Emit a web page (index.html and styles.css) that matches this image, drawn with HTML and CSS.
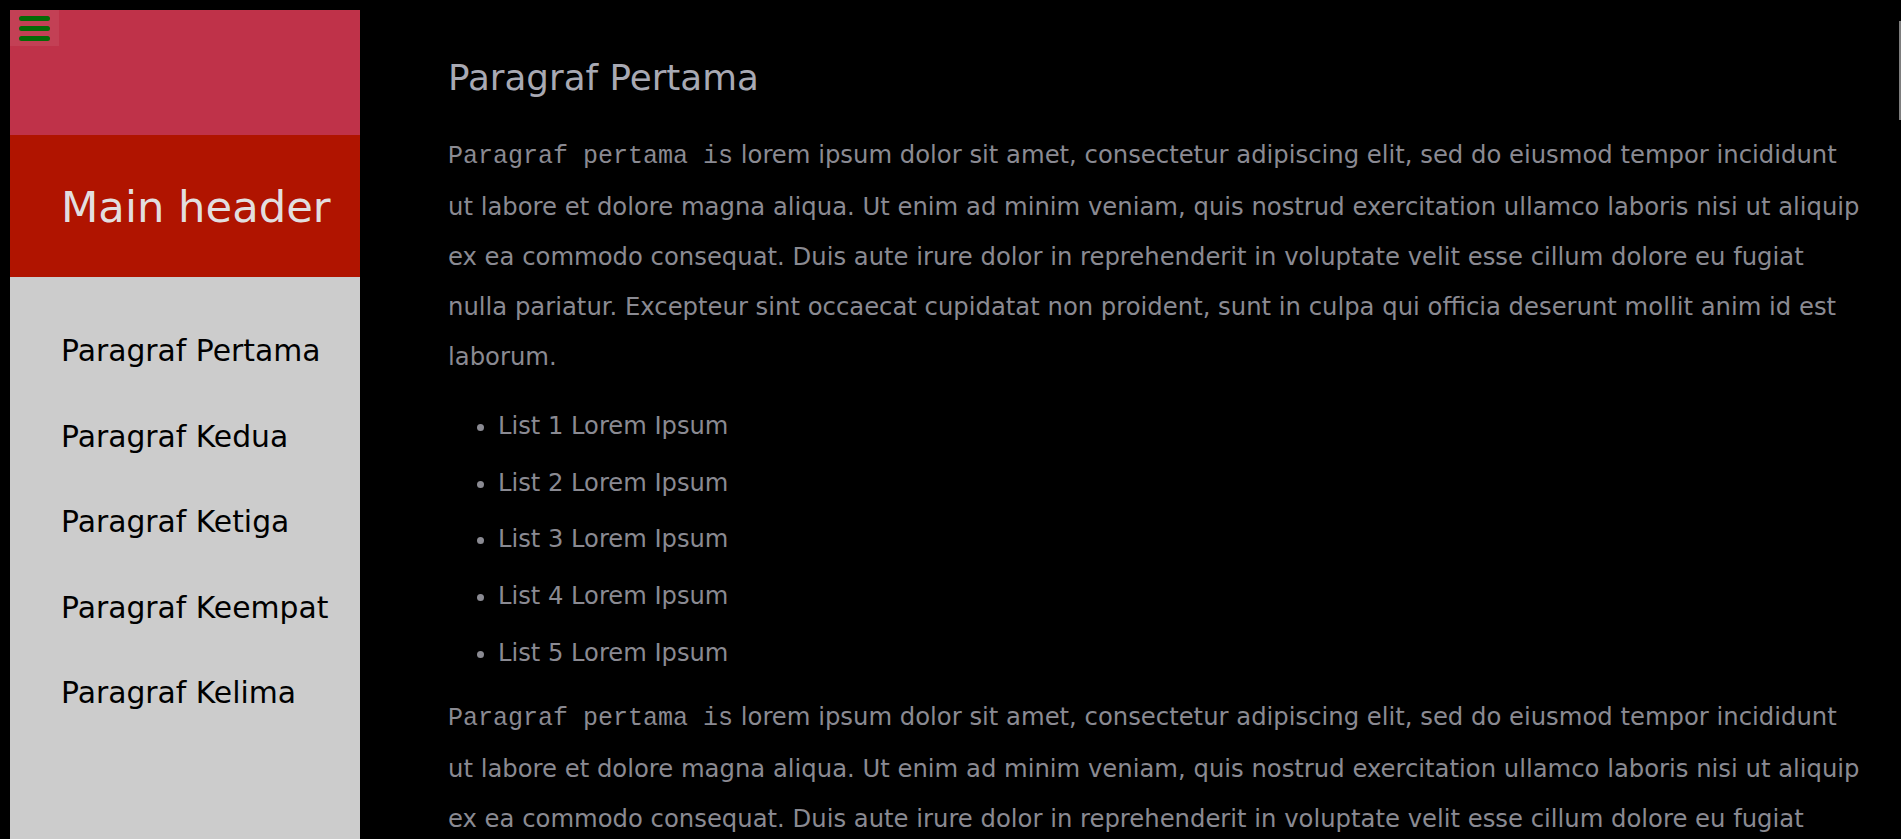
FILE: index.html
```html
<!DOCTYPE html>
<html lang="id">
<head>
<meta charset="utf-8">
<title>Paragraf</title>
<link rel="stylesheet" href="styles.css">
</head>
<body>
<aside class="sidebar">
  <button class="menu-btn" aria-label="Menu">
    <span class="bar"></span><span class="bar"></span><span class="bar"></span>
  </button>
  <div class="sidebar-top"></div>
  <header class="sidebar-header"><h1 class="main-title">Main header</h1></header>
  <nav class="nav">
    <a class="nav-item" href="#p1">Paragraf Pertama</a>
    <a class="nav-item" href="#p2">Paragraf Kedua</a>
    <a class="nav-item" href="#p3">Paragraf Ketiga</a>
    <a class="nav-item" href="#p4">Paragraf Keempat</a>
    <a class="nav-item" href="#p5">Paragraf Kelima</a>
  </nav>
</aside>
<main class="content">
  <section class="section" id="p1">
    <h2 class="section-title">Paragraf Pertama</h2>
    <p class="text"><code class="code">Paragraf pertama is</code> lorem ipsum dolor sit amet, consectetur adipiscing elit, sed do eiusmod tempor incididunt ut labore et dolore magna aliqua. Ut enim ad minim veniam, quis nostrud exercitation ullamco laboris nisi ut aliquip ex ea commodo consequat. Duis aute irure dolor in reprehenderit in voluptate velit esse cillum dolore eu fugiat nulla pariatur. Excepteur sint occaecat cupidatat non proident, sunt in culpa qui officia deserunt mollit anim id est laborum.</p>
    <ul class="list">
      <li>List 1 Lorem Ipsum</li>
      <li>List 2 Lorem Ipsum</li>
      <li>List 3 Lorem Ipsum</li>
      <li>List 4 Lorem Ipsum</li>
      <li>List 5 Lorem Ipsum</li>
    </ul>
    <p class="text"><code class="code">Paragraf pertama is</code> lorem ipsum dolor sit amet, consectetur adipiscing elit, sed do eiusmod tempor incididunt ut labore et dolore magna aliqua. Ut enim ad minim veniam, quis nostrud exercitation ullamco laboris nisi ut aliquip ex ea commodo consequat. Duis aute irure dolor in reprehenderit in voluptate velit esse cillum dolore eu fugiat nulla pariatur. Excepteur sint occaecat cupidatat non proident, sunt in culpa qui officia deserunt mollit anim id est laborum.</p>
  </section>
  <section class="section" id="p2">
    <h2 class="section-title">Paragraf Kedua</h2>
    <p class="text"><code class="code">Paragraf kedua is</code> lorem ipsum dolor sit amet, consectetur adipiscing elit, sed do eiusmod tempor incididunt ut labore et dolore magna aliqua. Ut enim ad minim veniam, quis nostrud exercitation ullamco laboris nisi ut aliquip ex ea commodo consequat. Duis aute irure dolor in reprehenderit in voluptate velit esse cillum dolore eu fugiat nulla pariatur. Excepteur sint occaecat cupidatat non proident, sunt in culpa qui officia deserunt mollit anim id est laborum.</p>
    <ul class="list">
      <li>List 1 Lorem Ipsum</li>
      <li>List 2 Lorem Ipsum</li>
      <li>List 3 Lorem Ipsum</li>
      <li>List 4 Lorem Ipsum</li>
      <li>List 5 Lorem Ipsum</li>
    </ul>
    <p class="text"><code class="code">Paragraf kedua is</code> lorem ipsum dolor sit amet, consectetur adipiscing elit, sed do eiusmod tempor incididunt ut labore et dolore magna aliqua. Ut enim ad minim veniam, quis nostrud exercitation ullamco laboris nisi ut aliquip ex ea commodo consequat. Duis aute irure dolor in reprehenderit in voluptate velit esse cillum dolore eu fugiat nulla pariatur. Excepteur sint occaecat cupidatat non proident, sunt in culpa qui officia deserunt mollit anim id est laborum.</p>
  </section>
  <section class="section" id="p3">
    <h2 class="section-title">Paragraf Ketiga</h2>
    <p class="text"><code class="code">Paragraf ketiga is</code> lorem ipsum dolor sit amet, consectetur adipiscing elit, sed do eiusmod tempor incididunt ut labore et dolore magna aliqua. Ut enim ad minim veniam, quis nostrud exercitation ullamco laboris nisi ut aliquip ex ea commodo consequat. Duis aute irure dolor in reprehenderit in voluptate velit esse cillum dolore eu fugiat nulla pariatur. Excepteur sint occaecat cupidatat non proident, sunt in culpa qui officia deserunt mollit anim id est laborum.</p>
    <ul class="list">
      <li>List 1 Lorem Ipsum</li>
      <li>List 2 Lorem Ipsum</li>
      <li>List 3 Lorem Ipsum</li>
      <li>List 4 Lorem Ipsum</li>
      <li>List 5 Lorem Ipsum</li>
    </ul>
    <p class="text"><code class="code">Paragraf ketiga is</code> lorem ipsum dolor sit amet, consectetur adipiscing elit, sed do eiusmod tempor incididunt ut labore et dolore magna aliqua. Ut enim ad minim veniam, quis nostrud exercitation ullamco laboris nisi ut aliquip ex ea commodo consequat. Duis aute irure dolor in reprehenderit in voluptate velit esse cillum dolore eu fugiat nulla pariatur. Excepteur sint occaecat cupidatat non proident, sunt in culpa qui officia deserunt mollit anim id est laborum.</p>
  </section>
  <section class="section" id="p4">
    <h2 class="section-title">Paragraf Keempat</h2>
    <p class="text"><code class="code">Paragraf keempat is</code> lorem ipsum dolor sit amet, consectetur adipiscing elit, sed do eiusmod tempor incididunt ut labore et dolore magna aliqua. Ut enim ad minim veniam, quis nostrud exercitation ullamco laboris nisi ut aliquip ex ea commodo consequat. Duis aute irure dolor in reprehenderit in voluptate velit esse cillum dolore eu fugiat nulla pariatur. Excepteur sint occaecat cupidatat non proident, sunt in culpa qui officia deserunt mollit anim id est laborum.</p>
    <ul class="list">
      <li>List 1 Lorem Ipsum</li>
      <li>List 2 Lorem Ipsum</li>
      <li>List 3 Lorem Ipsum</li>
      <li>List 4 Lorem Ipsum</li>
      <li>List 5 Lorem Ipsum</li>
    </ul>
    <p class="text"><code class="code">Paragraf keempat is</code> lorem ipsum dolor sit amet, consectetur adipiscing elit, sed do eiusmod tempor incididunt ut labore et dolore magna aliqua. Ut enim ad minim veniam, quis nostrud exercitation ullamco laboris nisi ut aliquip ex ea commodo consequat. Duis aute irure dolor in reprehenderit in voluptate velit esse cillum dolore eu fugiat nulla pariatur. Excepteur sint occaecat cupidatat non proident, sunt in culpa qui officia deserunt mollit anim id est laborum.</p>
  </section>
  <section class="section" id="p5">
    <h2 class="section-title">Paragraf Kelima</h2>
    <p class="text"><code class="code">Paragraf kelima is</code> lorem ipsum dolor sit amet, consectetur adipiscing elit, sed do eiusmod tempor incididunt ut labore et dolore magna aliqua. Ut enim ad minim veniam, quis nostrud exercitation ullamco laboris nisi ut aliquip ex ea commodo consequat. Duis aute irure dolor in reprehenderit in voluptate velit esse cillum dolore eu fugiat nulla pariatur. Excepteur sint occaecat cupidatat non proident, sunt in culpa qui officia deserunt mollit anim id est laborum.</p>
    <ul class="list">
      <li>List 1 Lorem Ipsum</li>
      <li>List 2 Lorem Ipsum</li>
      <li>List 3 Lorem Ipsum</li>
      <li>List 4 Lorem Ipsum</li>
      <li>List 5 Lorem Ipsum</li>
    </ul>
    <p class="text"><code class="code">Paragraf kelima is</code> lorem ipsum dolor sit amet, consectetur adipiscing elit, sed do eiusmod tempor incididunt ut labore et dolore magna aliqua. Ut enim ad minim veniam, quis nostrud exercitation ullamco laboris nisi ut aliquip ex ea commodo consequat. Duis aute irure dolor in reprehenderit in voluptate velit esse cillum dolore eu fugiat nulla pariatur. Excepteur sint occaecat cupidatat non proident, sunt in culpa qui officia deserunt mollit anim id est laborum.</p>
  </section>
</main>
<div class="scroll-thumb" aria-hidden="true"></div>
</body>
</html>
```

FILE: styles.css
```css
html {
  background: #000;
}

body {
  margin: 10px;
  background: #000;
  font-family: "DejaVu Sans", Verdana, sans-serif;
  display: grid;
  grid-template-columns: 350px 1fr;
  align-items: stretch;
}

.sidebar {
  position: relative;
  background: #cccccc;
  display: flex;
  flex-direction: column;
}

.menu-btn {
  position: absolute;
  top: -1px;
  left: 0;
  width: 49px;
  height: 37px;
  padding: 7px 0 0 9px;
  margin: 0;
  border: 0;
  background: rgba(255, 255, 255, 0.07);
  display: flex;
  flex-direction: column;
  gap: 5px;
  cursor: pointer;
}

.bar {
  display: block;
  width: 31px;
  height: 5px;
  border-radius: 3px;
  background: #056a05;
}

.sidebar-top {
  height: 125px;
  background: #bf3249;
}

.sidebar-header {
  background: #b01400;
  padding: 47px 0 45px 51px;
}

.main-title {
  margin: 0;
  font-size: 43.3px;
  line-height: 50px;
  font-weight: normal;
  color: #e2dedf;
}

.nav {
  display: flex;
  flex-direction: column;
  padding: 31px 0 0 51px;
}

.nav-item {
  display: block;
  padding: 26px 0;
  font-size: 29.8px;
  line-height: 33.5px;
  color: #000;
  text-decoration: none;
}

.content {
  padding: 0 23px 0 88px;
  min-width: 0;
}

.section-title {
  margin: 47px 0 32px;
  font-size: 35.7px;
  line-height: 41px;
  font-weight: normal;
  color: #a8a9b3;
}

.text {
  margin: 0;
  font-size: 24.3px;
  line-height: 50px;
  color: #8a8a92;
}

.code {
  font-family: "Liberation Mono", "Courier New", monospace;
  font-size: 25px;
  color: #8a8a92;
}

.list {
  margin: 16px 0 10px;
  padding-left: 50px;
  color: #8a8a92;
  font-size: 24.2px;
}

.list li {
  line-height: 56.7px;
}

.scroll-thumb {
  position: fixed;
  top: 21px;
  right: 0;
  width: 2px;
  height: 99px;
  background: #7d7d7d;
}
```
